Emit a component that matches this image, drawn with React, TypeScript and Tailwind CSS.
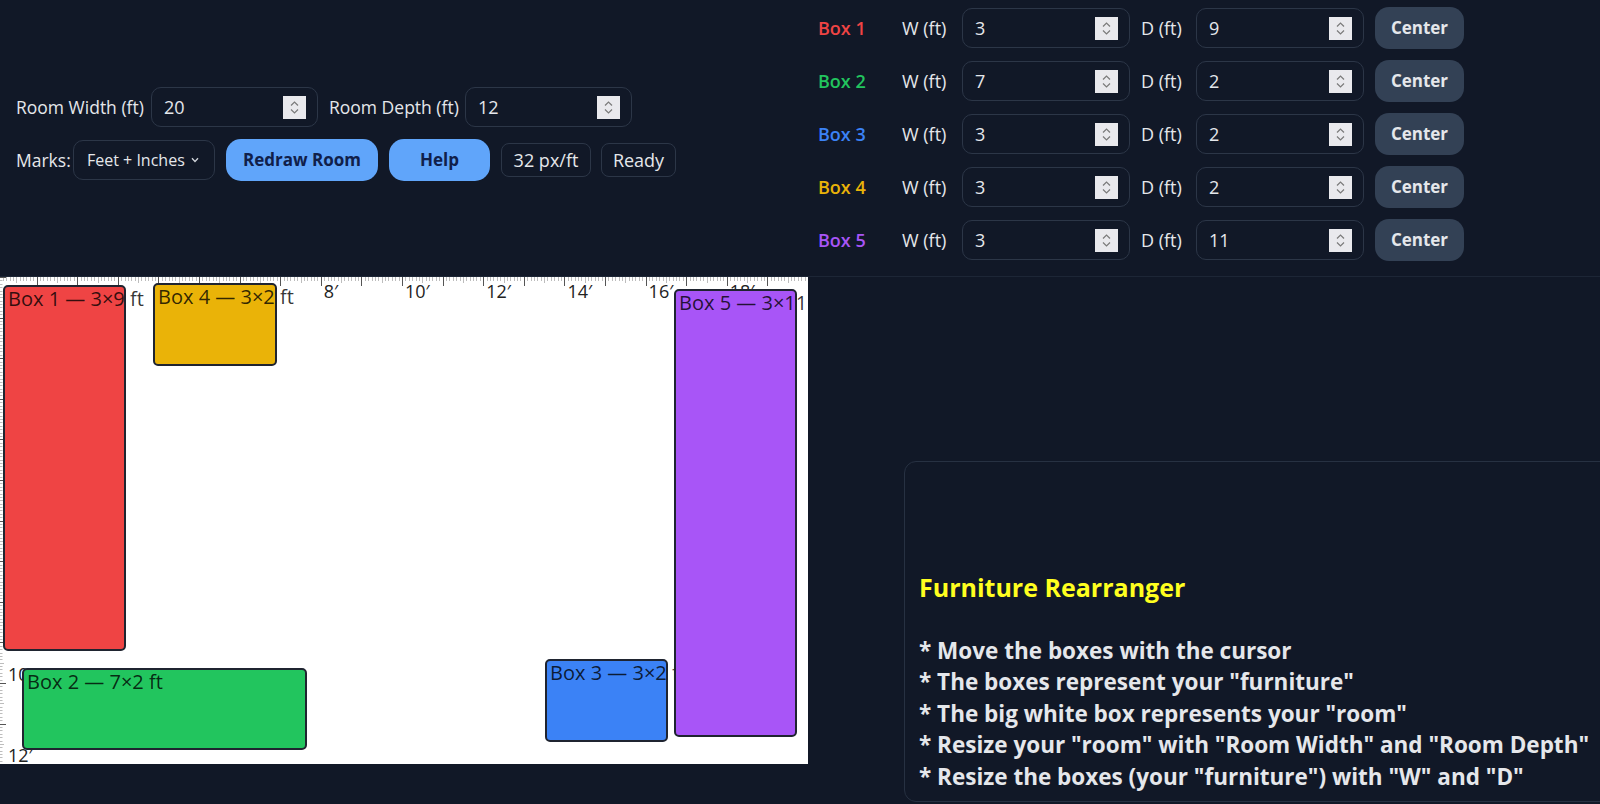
import React from "react";

// Room scale: pixels per foot on the drawing, and the horizontal origin shift.
const S = 40.6;
const OX = -4;
const ROOM_W = 20;
const ROOM_D = 12;

type Box = {
  id: number;
  w: number;
  d: number;
  color: string;
  text: string;
  x: number;
  y: number;
  pw: number;
  ph: number;
};

const boxes: Box[] = [
  { id: 1, w: 3, d: 9, color: "#ef4444", text: "text-[#ef4444]", x: 3, y: 8, pw: 123, ph: 366 },
  { id: 2, w: 7, d: 2, color: "#22c55e", text: "text-[#22c55e]", x: 22, y: 391, pw: 285, ph: 82 },
  { id: 3, w: 3, d: 2, color: "#3b82f6", text: "text-[#3b82f6]", x: 545, y: 382, pw: 123, ph: 83 },
  { id: 4, w: 3, d: 2, color: "#eab308", text: "text-[#eab308]", x: 153, y: 6, pw: 124, ph: 83 },
  { id: 5, w: 3, d: 11, color: "#a855f7", text: "text-[#a855f7]", x: 674, y: 12, pw: 123, ph: 448 },
];

function Spinner() {
  return (
    <svg width="23" height="23" viewBox="0 0 23 23" className="shrink-0">
      <rect width="23" height="23" fill="#e9e9ed" />
      <path d="M8 9.5 L11.5 6 L15 9.5" fill="none" stroke="#7a7a7a" strokeWidth="1.2" />
      <path d="M8 13.5 L11.5 17 L15 13.5" fill="none" stroke="#7a7a7a" strokeWidth="1.2" />
    </svg>
  );
}

function NumField({ value, wide }: { value: string; wide?: boolean }) {
  return (
    <div
      className={
        (wide ? "w-[168px] " : "w-[167px] ") +
        "h-10 shrink-0 rounded-[10px] border border-[#2c3647] flex items-center justify-between pl-[12px] pr-[11px] text-[#e5e7eb]"
      }
    >
      <span>{value}</span>
      <Spinner />
    </div>
  );
}

function RoomCanvas() {
  const ticksTop: React.ReactNode[] = [];
  for (let i = 0; i <= ROOM_W * 12; i++) {
    const x = Math.round(OX + (i * S) / 12) + 0.5;
    const foot = i % 12 === 0;
    const half = i % 6 === 0;
    const len = foot ? 9 : half ? 6 : 4;
    ticksTop.push(
      <line key={"t" + i} x1={x} y1={0} x2={x} y2={len} stroke={foot ? "#555" : "#bdbdbd"} strokeWidth={1} />
    );
  }
  const ticksLeft: React.ReactNode[] = [];
  for (let i = 0; i <= ROOM_D * 12; i++) {
    const y = Math.round((i * S) / 12) + 0.5;
    const foot = i % 12 === 0;
    const half = i % 6 === 0;
    const len = foot ? 6 : half ? 4 : 2.5;
    ticksLeft.push(
      <line key={"l" + i} x1={0} y1={y} x2={len} y2={y} stroke={foot ? "#555" : "#bdbdbd"} strokeWidth={1} />
    );
  }
  const labelsTop = [2, 4, 6, 8, 10, 12, 14, 16, 18].map((ft) => (
    <text key={"lt" + ft} x={OX + ft * S + 3} y={21} fontSize={18} fill="#222">
      {ft}′
    </text>
  ));
  const labelsLeft = [2, 4, 6, 8, 10, 12].map((ft) => (
    <text key={"ll" + ft} x={8} y={ft * S - 2} fontSize={18} fill="#222">
      {ft}′
    </text>
  ));

  return (
    <div className="w-[808px] h-[487px] bg-white overflow-hidden shrink-0">
      <svg width="808" height="487" viewBox="0 0 808 487" fontFamily="'Open Sans', 'Noto Sans', sans-serif">
        {ticksTop}
        {ticksLeft}
        {labelsTop}
        {labelsLeft}
        {boxes.map((b) => (
          <g key={b.id}>
            <rect
              x={b.x + 1}
              y={b.y + 1}
              width={b.pw - 2}
              height={b.ph - 2}
              rx={4}
              fill={b.color}
              stroke="#1f2430"
              strokeWidth={2}
            />
            <text x={b.x + 5} y={b.y + 21} fontSize={20} fill="rgba(0,0,0,0.8)">
              Box {b.id} — {b.w}×{b.d} ft
            </text>
          </g>
        ))}
      </svg>
    </div>
  );
}

export default function App() {
  return (
    <div className="relative w-[1600px] h-[804px] overflow-hidden bg-[#111827] text-[#e5e7eb] text-[18px] font-['Open_Sans','Noto_Sans',sans-serif]">
      <header className="flex h-[277px] border-b border-[#1d2636]">
        <div className="w-[800px] shrink-0 pl-4 pt-[7px] pb-[15px] flex flex-col justify-center gap-3">
          <div className="flex items-center gap-[11px]">
            <label className="flex items-center gap-[6px]">
              <span className="w-[129px] whitespace-nowrap text-[17.5px]">Room Width (ft)</span>
              <NumField value="20" />
            </label>
            <label className="flex items-center gap-[5px]">
              <span className="w-[131px] whitespace-nowrap text-[17.5px]">Room Depth (ft)</span>
              <NumField value="12" />
            </label>
          </div>
          <div className="flex items-center gap-[11px]">
            <label className="flex items-center gap-[5px]">
              <span className="w-[52px] whitespace-nowrap text-[17.5px]">Marks:</span>
              <div className="w-[142px] h-10 rounded-[10px] border border-[#2c3647] flex items-center justify-between pl-[13px] pr-[15px] text-[16px]">
                <span className="whitespace-nowrap">Feet + Inches</span>
                <svg width="8" height="6" viewBox="0 0 8 6">
                  <path d="M1 1.2 L4 4.5 L7 1.2" fill="none" stroke="#d1d5db" strokeWidth="1.3" />
                </svg>
              </div>
            </label>
            <button className="w-[152px] h-[42px] rounded-[15px] bg-[#60a5fa] text-[#10204a] font-bold text-[17px]">
              Redraw Room
            </button>
            <button className="w-[101px] h-[42px] rounded-[15px] bg-[#60a5fa] text-[#10204a] font-bold text-[17px]">
              Help
            </button>
            <span className="w-[90px] h-[34px] rounded-lg border border-[#2c3647] flex items-center justify-center whitespace-nowrap">
              32 px/ft
            </span>
            <span className="w-[75px] h-[34px] rounded-lg border border-[#2c3647] flex items-center justify-center ml-[-1px]">
              Ready
            </span>
          </div>
        </div>
        <div className="pl-[18px] pt-[7px] flex flex-col gap-[11px]">
          {boxes.map((b) => (
            <div key={b.id} className="flex items-center gap-[11px] h-[42px]">
              <span className={"w-[73px] font-semibold whitespace-nowrap " + b.text}>Box {b.id}</span>
              <span className="w-[49px] whitespace-nowrap">W (ft)</span>
              <NumField value={String(b.w)} wide />
              <span className="w-[44px] whitespace-nowrap">D (ft)</span>
              <NumField value={String(b.d)} wide />
              <button className="w-[89px] h-[42px] rounded-[14px] bg-[#334155] text-[#e5e7eb] font-bold text-[17px]">
                Center
              </button>
            </div>
          ))}
        </div>
      </header>

      <main className="flex">
        <RoomCanvas />
      </main>

      <section className="absolute left-[904px] top-[461px] w-[740px] h-[341px] rounded-xl border border-[#273142] bg-[#111827] flex flex-col justify-end pl-[14px] pb-[9px] leading-[31.5px] font-bold">
        <div className="text-[25px] text-[#ffff1f]">Furniture Rearranger</div>
        <div className="h-[31.5px]" />
        <div className="text-[22.5px] text-[#e5e7eb] whitespace-nowrap">
          <div>* Move the boxes with the cursor</div>
          <div>* The boxes represent your "furniture"</div>
          <div>* The big white box represents your "room"</div>
          <div>* Resize your "room" with "Room Width" and "Room Depth"</div>
          <div>* Resize the boxes (your "furniture") with "W" and "D"</div>
        </div>
      </section>
    </div>
  );
}
